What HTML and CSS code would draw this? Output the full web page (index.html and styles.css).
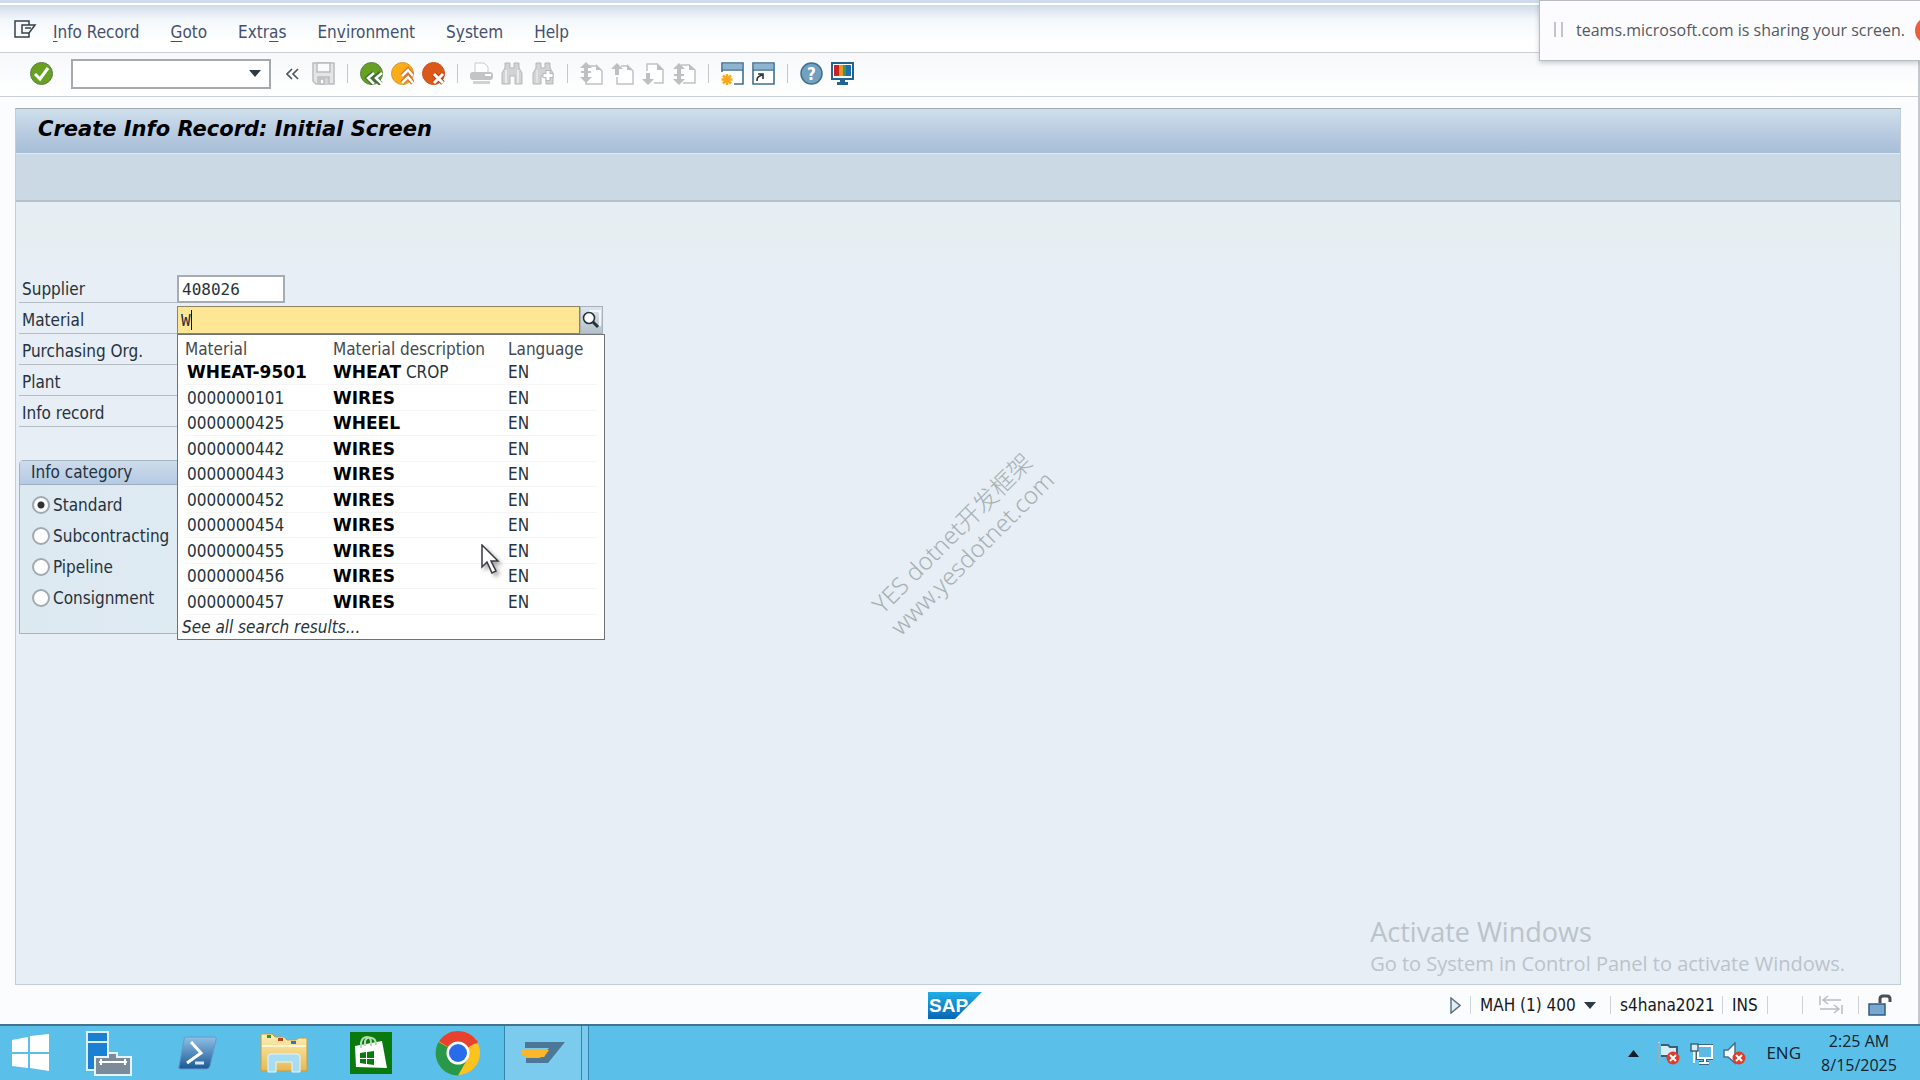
FILE: index.html
```html
<!DOCTYPE html>
<html lang="en">
<head>
<meta charset="utf-8">
<title>Create Info Record: Initial Screen</title>
<link rel="stylesheet" href="styles.css">
</head>
<body>
<div class="window">
  <nav class="menubar">
    <button class="icon-btn menu-icon" aria-label="Menu"><svg width="24" height="18" viewBox="0 0 24 18" fill="none" stroke="#35424c" stroke-width="1.5"><path d="M15 5V1H1v16h14v-4"/><path d="M8 5h13l-6 8H8z"/><path d="M11 8h6"/></svg></button>
    <a href="#"><u>I</u>nfo Record</a>
    <a href="#"><u>G</u>oto</a>
    <a href="#">Extr<u>a</u>s</a>
    <a href="#">En<u>v</u>ironment</a>
    <a href="#">S<u>y</u>stem</a>
    <a href="#"><u>H</u>elp</a>
  </nav>

  <div class="toolbar">
    <button class="icon-btn" aria-label="Enter"><svg width="23" height="23" viewBox="0 0 23 23"><circle cx="11.500" cy="11.500" r="11" fill="#68a022" stroke="#5b7f43"/><path d="M5 12l5 5 8-11" fill="none" stroke="#fff" stroke-width="3"/></svg></button>
    <div class="command">
      <input type="text" aria-label="Command">
      <svg width="12" height="7" viewBox="0 0 12 7"><path d="M0 0h12L6 7z" fill="#2e3a42"/></svg>
    </div>
    <button class="icon-btn collapse" aria-label="Collapse"><svg width="13" height="12" viewBox="0 0 13 12" fill="none" stroke="#4a555d" stroke-width="1.600"><path d="M6 1L1 6l5 5M12 1L7 6l5 5"/></svg></button>
    <button class="icon-btn" aria-label="Save"><svg width="23" height="23" viewBox="0 0 23 23" fill="#e4e5e6" stroke="#babcbf" stroke-width="1.500"><path d="M1 1h21v21H4l-3-3z"/><path d="M5 1h13v9H5z" fill="#fbfbfb"/><path d="M6 22v-7h11v7" fill="#d2d4d6"/><path d="M8 17h4v5H8z" fill="#fff"/></svg></button>
    <span class="sep"></span>
    <button class="icon-btn" aria-label="Back"><svg width="23" height="23" viewBox="0 0 23 23"><circle cx="11.500" cy="11.500" r="11" fill="#68a022" stroke="#598441"/><path d="M14 11l-6 5 6 6M21 11l-6 5 6 6" fill="none" stroke="#456f38" stroke-width="5"/><path d="M14 11l-6 5 6 6M22 11l-6 5 6 6" fill="none" stroke="#fff" stroke-width="2.500"/></svg></button>
    <button class="icon-btn" aria-label="Exit"><svg width="23" height="23" viewBox="0 0 23 23"><circle cx="11.500" cy="11.500" r="11" fill="#fbad18" stroke="#dc9636"/><path d="M11 14l6-6 5 6M11 21l6-6 5 6" fill="none" stroke="#d9752a" stroke-width="5"/><path d="M11 14l6-6 5 6M11 21l6-6 5 6" fill="none" stroke="#fff" stroke-width="2.500"/></svg></button>
    <button class="icon-btn" aria-label="Cancel"><svg width="23" height="23" viewBox="0 0 23 23"><circle cx="11.500" cy="11.500" r="11" fill="#dc5818" stroke="#c7551f"/><path d="M12 12l9 9M21 12l-9 9" stroke="#b6441a" stroke-width="5"/><path d="M12 12l9 9M21 12l-9 9" stroke="#fff" stroke-width="3"/></svg></button>
    <span class="sep"></span>
    <button class="icon-btn" aria-label="Print"><svg width="23" height="23" viewBox="0 0 23 23"><path d="M5 10V1h9l4 4v5" fill="#fff" stroke="#c8cacb"/><rect x="0" y="10" width="23" height="8" rx="3" fill="#c2c4c5"/><path d="M15 13h6" stroke="#fff" stroke-width="2"/><path d="M3 19h17v3H3z" fill="#d0d1d2"/></svg></button>
    <button class="icon-btn" aria-label="Find"><svg width="23" height="23" viewBox="0 0 23 23"><path d="M4 1h5v5h4V1h5v5l3 5v11h-7v-8H9v8H1V11l3-5z" fill="#d1d3d4" stroke="#b5b7b9"/><path d="M5 8v13M17 8v13" stroke="#f2f2f2" stroke-width="1.500"/></svg></button>
    <button class="icon-btn" aria-label="Find next"><svg width="23" height="23" viewBox="0 0 23 23"><path d="M4 1h5v5h4V1h5v5l3 5v11h-7v-8H9v8H1V11l3-5z" fill="#d1d3d4" stroke="#b5b7b9"/><path d="M5 8v13" stroke="#f2f2f2"/><path d="M16 8v11M10.500 13.500h11" stroke="#b8babb" stroke-width="5"/><path d="M16 9v9M11.500 13.500h9" stroke="#fff" stroke-width="3"/></svg></button>
    <span class="sep"></span>
    <button class="icon-btn" aria-label="First page"><svg width="23" height="23" viewBox="0 0 23 23"><path d="M8 4h8l6 5v13H6v-3" fill="#fff" stroke="#c0c2c3" stroke-width="1.500"/><path d="M16 2l6 6h-6zM6 0l6 6H8v9h4l-6 6-6-6h4V6H0zM1 9h10v2H1z" fill="#bdbfc0"/></svg></button>
    <button class="icon-btn" aria-label="Previous page"><svg width="23" height="23" viewBox="0 0 23 23"><path d="M10 4h6l6 5v13H6v-7" fill="#fff" stroke="#c0c2c3" stroke-width="1.500"/><path d="M16 2l6 6h-6zM6 1l6 6H8v6H4V7H0z" fill="#bdbfc0"/></svg></button>
    <button class="icon-btn" aria-label="Next page"><svg width="23" height="23" viewBox="0 0 23 23"><path d="M5 9V2h10l6 6v13h-9" fill="#fff" stroke="#c0c2c3" stroke-width="1.500"/><path d="M15 1l7 7h-7zM4 11h4v6h4l-6 6-6-6h4z" fill="#bdbfc0"/></svg></button>
    <button class="icon-btn" aria-label="Last page"><svg width="23" height="23" viewBox="0 0 23 23"><path d="M8 3h8l6 5v13H10" fill="#fff" stroke="#c0c2c3" stroke-width="1.500"/><path d="M16 2l6 6h-6zM6 1l6 6H8v10h4l-6 6-6-6h4V7H0zM1 12h10v2H1z" fill="#bdbfc0"/></svg></button>
    <span class="sep"></span>
    <button class="icon-btn" aria-label="New session"><svg width="23" height="23" viewBox="0 0 23 23"><path d="M1 10V1h21v21H13" fill="#fff" stroke="#41708f" stroke-width="1.600"/><path d="M2 2h19v5H2z" fill="#8db5d1"/><path d="M1 8h21" stroke="#41708f" stroke-width="1.500"/><path d="M6 12v11M.5 17.500h11M2 13.500l8 8M10 13.500l-8 8" stroke="#f9a91e" stroke-width="2.500"/></svg></button>
    <button class="icon-btn" aria-label="Shortcut"><svg width="23" height="23" viewBox="0 0 23 23"><path d="M1 1h21v21H1z" fill="#fff" stroke="#41708f" stroke-width="1.600"/><path d="M2 2h19v5H2z" fill="#8db5d1"/><path d="M1 8h21" stroke="#41708f" stroke-width="1.500"/><path d="M5 19c0-4 1-4 5-6M6 12h5v5" fill="none" stroke="#2d3337" stroke-width="1.600"/></svg></button>
    <span class="sep"></span>
    <button class="icon-btn help" aria-label="Help"><svg width="23" height="23" viewBox="0 0 23 23"><circle cx="11.500" cy="11.500" r="10.500" fill="#71a0c1" stroke="#3f6f91" stroke-width="1.500"/><text x="11.500" y="18" text-anchor="middle">?</text></svg></button>
    <button class="icon-btn" aria-label="Customize layout"><svg width="23" height="23" viewBox="0 0 23 23"><path d="M1 1h21v16H1z" fill="#fff" stroke="#23638f" stroke-width="2"/><path d="M3 3h5v11H3z" fill="#cb2026"/><path d="M8 3h4v11H8z" fill="#e69a24"/><path d="M12 3h3v11h-3z" fill="#3d9a49"/><path d="M15 3h5v11h-5z" fill="#1d70ad"/><path d="M9 17h5v3h3v3H6v-3h3z" fill="#23638f"/></svg></button>
  </div>

  <main class="screen">
    <header class="titlebar"><h1>Create Info Record: Initial Screen</h1></header>
    <div class="app-toolbar"></div>
    <form class="form">
      <div class="row"><label for="supplier">Supplier</label><input id="supplier" class="field supplier" type="text" value="408026"></div>
      <div class="row">
        <label for="material">Material</label>
        <div class="lookup">
          <input id="material" class="field material" type="text" value="W">
          <span class="caret"></span>
          <button type="button" class="search" aria-label="Search"><svg width="20" height="20" viewBox="0 0 20 20"><path d="M8 1h11v15" fill="none" stroke="#f4f7f9" stroke-width="2"/><circle cx="8" cy="8" r="5.500" fill="#fff" stroke="#27323a" stroke-width="1.600"/><path d="M12 12l5 5" stroke="#27323a" stroke-width="3"/></svg></button>
          <div class="popup">
            <table>
              <thead><tr><th class="c-mat">Material</th><th class="c-desc">Material description</th><th>Language</th></tr></thead>
              <tbody>
                <tr><td><b>WHEAT-9501</b></td><td><b>WHEAT</b> CROP</td><td>EN</td></tr>
                <tr><td>0000000101</td><td><b>WIRES</b></td><td>EN</td></tr>
                <tr><td>0000000425</td><td><b>WHEEL</b></td><td>EN</td></tr>
                <tr><td>0000000442</td><td><b>WIRES</b></td><td>EN</td></tr>
                <tr><td>0000000443</td><td><b>WIRES</b></td><td>EN</td></tr>
                <tr><td>0000000452</td><td><b>WIRES</b></td><td>EN</td></tr>
                <tr><td>0000000454</td><td><b>WIRES</b></td><td>EN</td></tr>
                <tr><td>0000000455</td><td><b>WIRES</b></td><td>EN</td></tr>
                <tr><td>0000000456</td><td><b>WIRES</b></td><td>EN</td></tr>
                <tr><td>0000000457</td><td><b>WIRES</b></td><td>EN</td></tr>
              </tbody>
            </table>
            <a class="see-all" href="#">See all search results...</a>
            <svg class="pointer" width="20" height="32" viewBox="0 0 20 32"><path d="M1 1v22l5-5 5 11 4-2-5-10h7z" fill="#fff" stroke="#3a3a42" stroke-width="1.500"/></svg>
          </div>
        </div>
      </div>
      <div class="row"><label>Purchasing Org.</label></div>
      <div class="row"><label>Plant</label></div>
      <div class="row"><label>Info record</label></div>

      <fieldset class="group">
        <legend class="group-title">Info category</legend>
        <label class="option"><input type="radio" name="category" checked>Standard</label>
        <label class="option"><input type="radio" name="category">Subcontracting</label>
        <label class="option"><input type="radio" name="category">Pipeline</label>
        <label class="option"><input type="radio" name="category">Consignment</label>
      </fieldset>
    </form>
    <div class="watermark">YES dotnet开发框架<br>www.yesdotnet.com</div>
    <div class="activate"><p class="activate-title">Activate Windows</p><p>Go to System in Control Panel to activate Windows.</p></div>
  </main>

  <footer class="status">
    <svg class="sap" width="54" height="27" viewBox="0 0 54 27"><defs><linearGradient id="sap" x2="0" y2="1"><stop stop-color="#20aee6"/><stop offset="1" stop-color="#0866b5"/></linearGradient></defs><path d="M0 0h54L27 27H0z" fill="url(#sap)"/><text x="1" y="20">SAP</text></svg>
    <div class="status-items">
      <svg class="expand" width="11" height="17" viewBox="0 0 11 17"><path d="M1 1l9 7.500L1 16z" fill="#e2eef6" stroke="#5d7485" stroke-width="1.500"/></svg>
      <span class="cell client">MAH (1) 400 <svg width="12" height="7" viewBox="0 0 12 7"><path d="M0 0h12L6 7z" fill="#2e3a42"/></svg></span>
      <span class="cell host">s4hana2021</span>
      <span class="cell mode">INS</span>
      <span class="cell blank"></span>
      <span class="cell arrows"><svg width="24" height="20" viewBox="0 0 24 20" fill="none" stroke="#bbbdc0" stroke-width="1.500"><path d="M1 1v9M22 5H4M9 1L4 5l5 4M23 10v9M1 14h19M15 10l5 4-5 4"/></svg></span>
      <span class="cell lock"><svg width="24" height="22" viewBox="0 0 24 22"><path d="M12 9V5q0-3 3-3h4q3 0 3 3v3" fill="none" stroke="#4b4f54" stroke-width="3"/><path d="M1 10h16v11H1z" fill="#78a8cf" stroke="#2f5c84" stroke-width="1.500"/></svg></span>
    </div>
  </footer>
</div>

<aside class="sharing"><span class="grip"></span>teams.microsoft.com is sharing your screen.<span class="stop"></span></aside>

<footer class="taskbar">
  <button class="task start" aria-label="Start"><svg width="39" height="38" viewBox="0 0 39 38" fill="#fff"><path d="M1 6l16-3v15H1zM19 2l19-2v18H19zM1 20h16v14L1 32zM19 20h19v17l-19-3z"/></svg></button>
  <button class="task server" aria-label="Server Manager"><svg width="46" height="46" viewBox="0 0 46 46"><path d="M1 2h21v38H1z" fill="#1b80d3" stroke="#d9f1fc" stroke-width="2"/><path d="M1 12h21" stroke="#d9f1fc" stroke-width="2"/><path d="M22 27v-4h9v4h14v18H9V27z" fill="#7c8b9a" stroke="#e5f3fa" stroke-width="2"/><path d="M13 32h28M15 29v6M39 29v6" stroke="#fff" stroke-width="2"/></svg></button>
  <button class="task powershell" aria-label="PowerShell"><svg width="40" height="34" viewBox="0 0 40 34"><defs><linearGradient id="ps" x2="0" y2="1"><stop stop-color="#8fc0e4"/><stop offset="1" stop-color="#1c5796"/></linearGradient></defs><path d="M9 1h29q2 0 1 3l-6 26q-1 3-3 3H3q-2 0-1-3L7 4q0-3 2-3z" fill="url(#ps)" stroke="#639cc8"/><path d="M14 6l10 11L10 27" fill="none" stroke="#fff" stroke-width="3"/><path d="M18 27h9" stroke="#d7e9f7" stroke-width="3"/></svg></button>
  <button class="task explorer" aria-label="File Explorer"><svg width="48" height="40" viewBox="0 0 48 40"><defs><linearGradient id="fo" x2="0" y2="1"><stop stop-color="#fff0b4"/><stop offset="1" stop-color="#e4b955"/></linearGradient></defs><path d="M1 38V2q0-1 1-1h10l3 3h9l3 3h9l3-2h7q1 0 1 2v31z" fill="url(#fo)" stroke="#c79b45"/><path d="M7 2h4v3H7z" fill="#2a963b"/><path d="M18 5h5v3h-5z" fill="#b64621"/><path d="M31 8h5v3h-5z" fill="#2e75c9"/><path d="M2 13h44" stroke="#fff5ce" stroke-width="2"/><path d="M8 39V24q0-3 3-3h26q3 0 3 3v15h-8V29H16v10z" fill="#a7dcf1" stroke="#e6f7fd"/></svg></button>
  <button class="task store" aria-label="Store"><svg width="42" height="42" viewBox="0 0 42 42"><path d="M0 0h42v42H0z" fill="#0a7a0e"/><path d="M5 14l27-5 5 27-31-1z" fill="#fff"/><path d="M11 16v-5q1-6 6-6 4 0 4 6v3M15 14V9q2-5 7-3 4 1 4 7" fill="none" stroke="#b5ddb4" stroke-width="2"/><path d="M10 21l6-1v6h-6zM17 20l7-1v7h-7zM10 27h6v5l-6-1zM17 27h7v6l-7-1z" fill="#0a7a0e"/></svg></button>
  <button class="task chrome" aria-label="Chrome"><svg width="46" height="46" viewBox="0 0 46 46"><circle cx="23" cy="23" r="22" fill="#fcc31f"/><path d="M23 23L4 11.500A22.500 22.500 0 0 1 42.500 12z" fill="#e8412e"/><path d="M23 23L3.500 12A22.500 22.500 0 0 0 23 45.500L33 28z" fill="#299848"/><path d="M23 12h19.500" stroke="#e8412e" stroke-width="3"/><circle cx="23" cy="23" r="11.500" fill="#fff"/><circle cx="23" cy="23" r="9" fill="#276de9"/></svg></button>
  <button class="task active" aria-label="SAP Logon"><svg width="46" height="24" viewBox="0 0 46 24"><path d="M5 1h40L28 22H6v-5h14l9-10H5z" fill="#4d7796"/><path d="M1 9h28l-5 7H6v-2H1z" fill="#fdb529"/></svg></button>
  <span class="stack"></span>
  <div class="tray">
    <svg class="up" width="11" height="7" viewBox="0 0 11 7"><path d="M0 7h11L5.500 0z" fill="#111d27"/></svg>
    <svg width="23" height="23" viewBox="0 0 23 23"><path d="M2 1v21M4 3h7l2 2h7v9H4" fill="#d5ecf7" stroke="#355f7a" stroke-width="2"/><path d="M2 0v22" stroke="#fff"/><circle cx="16" cy="16" r="6.500" fill="#de3d2b"/><path d="M13 13l6 6M19 13l-6 6" stroke="#fff" stroke-width="2"/></svg>
    <svg width="23" height="23" viewBox="0 0 23 23"><path d="M8 4h14v12H8zM15 16v5M9 21h10" fill="#70c5eb" stroke="#3c667f" stroke-width="4"/><path d="M8 4h14v12H8zM15 16v5M9 21h10M4 9v12" fill="#5ab9e6" stroke="#fff" stroke-width="2"/><path d="M1 2h7v7H1z" fill="#d9edf7" stroke="#3c667f" stroke-width="1.500"/></svg>
    <svg width="23" height="23" viewBox="0 0 23 23"><path d="M1 8h4l7-7v20l-7-6H1z" fill="#f4fafd" stroke="#497086" stroke-width="1.500"/><circle cx="16" cy="16" r="6.500" fill="#de3d2b"/><path d="M13 13l6 6M19 13l-6 6" stroke="#fff" stroke-width="2"/></svg>
    <span class="lang">ENG</span>
    <time class="clock">2:25 AM<br>8/15/2025</time>
  </div>
</footer>
</body>
</html>
```
FILE: styles.css
```css
* { box-sizing: border-box; }
body {
  margin: 0;
  min-height: 100vh;
  display: flex;
  flex-direction: column;
  position: relative;
  overflow-x: hidden;
  font: 17px/24px "DejaVu Sans Condensed", "DejaVu Sans", sans-serif;
  color: #26323c;
  background: #fbfcfe;
}
svg { display: block; flex: none; }
button, input { font: inherit; color: inherit; }
a { color: inherit; text-decoration: none; }

.window {
  flex: 1;
  display: flex;
  flex-direction: column;
  border-top: 3px solid #cfdbec;
  border-right: 2px solid #c3c8ce;
}
.icon-btn {
  padding: 0;
  border: 0;
  background: none;
  flex: none;
}
.menubar {
  display: flex;
  align-items: center;
  gap: 31px;
  height: 50px;
  padding: 6px 14px 0;
  color: #45506e;
  border-top: 2px solid #fff;
  border-bottom: 1px solid #cccfd4;
  background: linear-gradient(#cfdae8, #f3f7fc 14px, #fff 36px);
}
.menubar u { text-underline-offset: 3px; }
.menu-icon { margin: 0 -16px 6px 0; }

.toolbar {
  display: flex;
  align-items: center;
  gap: 8px;
  height: 44px;
  padding: 0 30px 2px;
  border-bottom: 1px solid #cccfd4;
  background: linear-gradient(#f6f8fa, #fff);
}
.command {
  display: flex;
  align-items: center;
  width: 200px;
  height: 30px;
  margin: 0 7px 0 10px;
  padding-right: 8px;
  border: 2px solid #a6a9ad;
  background: #fff;
}
.command input {
  flex: 1;
  min-width: 0;
  height: 24px;
  border: 0;
  outline: 0;
  background: none;
}
.collapse { margin-right: 5px; }
.sep {
  width: 1px;
  height: 19px;
  margin: 0 4px;
  background: #c4c8cb;
}
.help text { font: bold 17px "DejaVu Sans Condensed", sans-serif; fill: #fff; }

.screen {
  flex: 1;
  position: relative;
  margin: 11px 17px 0 15px;
  border: 1px solid #c5ced6;
  border-top-color: #a3abb3;
  background: linear-gradient(#dfedf8, #e6eef2 120px, #e7eef5 160px);
}
.titlebar {
  height: 45px;
  padding: 8px 22px;
  border-bottom: 1px solid #d9edfa;
  background: linear-gradient(#cfdfec, #b6c9df 60%, #a7bfd6);
}
.titlebar h1 {
  margin: 0;
  font: italic bold 21px/24px "DejaVu Sans", sans-serif;
  color: #000;
}
.app-toolbar {
  height: 48px;
  border-bottom: 2px solid #b3c1cd;
  background: #cbd9e5;
}
.form { padding: 70px 3px 0; }
.row {
  display: grid;
  grid-template-columns: 158px auto;
  align-items: end;
  justify-content: start;
  height: 31px;
}
.row > label {
  padding: 5px 3px 1px;
  border-bottom: 1px solid #b5bdc4;
}
.field {
  display: block;
  height: 28px;
  padding: 0 3px;
  border: 2px solid #a5adb4;
  outline: 0;
  background: #fff;
  font: 16px "DejaVu Sans Mono", monospace;
}
.supplier { width: 108px; }
.lookup { display: flex; position: relative; }
.material {
  width: 403px;
  border: 1px solid #8c8463;
  background: #fee794;
}
.caret {
  position: absolute;
  left: 14px;
  top: 4px;
  width: 1px;
  height: 20px;
  background: #111;
}
.search {
  width: 23px;
  height: 28px;
  padding: 0;
  border: 1px solid #a7b1ba;
  background: linear-gradient(#dce5ec, #b4c0ca);
}
.popup {
  position: absolute;
  left: 0;
  top: 28px;
  z-index: 2;
  width: 428px;
  padding: 3px 7px 0;
  border: 1px solid #6e7276;
  background: #fff;
}
.popup table {
  width: 100%;
  height: 277px;
  table-layout: fixed;
  border-collapse: collapse;
}
.popup th {
  height: 22px;
  padding: 0;
  line-height: 22px;
  text-align: left;
  font-weight: normal;
  color: #45494f;
}
.c-mat { width: 148px; }
.c-desc { width: 175px; }
.popup td {
  padding: 0;
  line-height: 24px;
  border-bottom: 1px solid #f5f5f6;
}
.popup td:first-child { padding-left: 2px; }
.popup b { font-family: "DejaVu Sans", sans-serif; color: #000; }
.see-all {
  display: block;
  margin-left: -3px;
  line-height: 24px;
  font-style: italic;
}
.pointer {
  position: absolute;
  left: 303px;
  top: 209px;
  filter: drop-shadow(3px 3px 2px #0005);
}

.group {
  width: 400px;
  margin: 33px 0 0;
  padding: 0 0 20px;
  border: 1px solid #a5b4c1;
  border-radius: 4px 4px 0 0;
  background: linear-gradient(90deg, #dde9f1, #e2ecf3);
}
.group-title {
  float: left;
  width: 100%;
  height: 24px;
  margin-bottom: 4px;
  padding: 0 11px;
  line-height: 22px;
  border-bottom: 1px solid #9cafc0;
  background: linear-gradient(#cddcec, #b5cae3);
}
.option {
  clear: both;
  display: flex;
  align-items: center;
  gap: 3px;
  height: 31px;
  padding-left: 12px;
}
.option input {
  appearance: none;
  width: 18px;
  height: 18px;
  margin: 0;
  border: 2px solid #a1a9b1;
  border-radius: 50%;
  background: #fff;
}
.option input:checked { background: radial-gradient(circle, #2c3338 3px, #fff 4px); }

.watermark {
  position: absolute;
  left: 50%;
  top: 50%;
  width: 260px;
  margin: -32px 0 0 -126px;
  text-align: center;
  font: 300 24px/28px "Noto Sans", "Noto Sans CJK SC", sans-serif;
  color: #a8b0b2;
  transform: rotate(-45deg);
}
.activate {
  position: absolute;
  right: 55px;
  bottom: 6px;
  font: 20px/28px "Open Sans", sans-serif;
  color: #bbc3cb;
}
.activate p { margin: 0; }
.activate .activate-title { font-size: 27px; line-height: 36px; }

.status {
  display: flex;
  align-items: center;
  justify-content: space-between;
  height: 39px;
  padding: 1px 26px 0 48.400%;
  color: #16191c;
}
.sap text { font: bold 19px "Liberation Sans", sans-serif; fill: #fff; }
.status-items { display: flex; align-items: center; }
.expand { margin-right: 9px; }
.cell {
  display: flex;
  align-items: center;
  gap: 8px;
  height: 18px;
  padding-left: 9px;
  border-left: 1px solid #cfd2d5;
}
.client { width: 140px; }
.host { width: 112px; }
.mode { width: 45px; }
.blank { width: 35px; }
.arrows { width: 56px; padding-left: 16px; }

.sharing {
  position: absolute;
  right: 0;
  top: 0;
  z-index: 3;
  display: flex;
  align-items: center;
  width: 381px;
  height: 61px;
  padding: 0 0 2px 14px;
  overflow: hidden;
  white-space: nowrap;
  font: 16px/24px "Open Sans", sans-serif;
  color: #55585e;
  border: solid #b9bdc3;
  border-width: 1px 0 1px 1px;
  background: #fcfcfe;
  box-shadow: 0 2px 5px #0003;
}
.grip {
  flex: none;
  width: 9px;
  height: 15px;
  margin-right: 13px;
  border: solid #c3c5c8;
  border-width: 0 2px;
}
.stop {
  position: absolute;
  right: -22px;
  top: 16px;
  width: 27px;
  height: 27px;
  border-radius: 50%;
  background: #e9603b;
}

.taskbar {
  display: flex;
  align-items: stretch;
  height: 56px;
  border-top: 2px solid #43738e;
  background: #5ac0ea;
  color: #12242f;
}
.task {
  display: flex;
  align-items: center;
  justify-content: center;
  width: 87px;
  padding: 0;
  border: 0;
  background: none;
}
.start { width: 60px; }
.server { width: 98px; }
.powershell { width: 78px; }
.explorer { width: 95px; }
.store { width: 80px; }
.chrome { width: 93px; }
.active {
  width: 78px;
  border: solid #3783a9;
  border-width: 0 1px;
  background: #7bcbee;
}
.stack {
  width: 7px;
  border-right: 1px solid #3783a9;
  background: #7bcbee;
}
.tray {
  display: flex;
  align-items: center;
  gap: 10px;
  margin-left: auto;
  padding-right: 21px;
}
.up { margin-right: 8px; }
.lang { margin-left: 10px; font: 17px/24px "Open Sans", sans-serif; }
.clock {
  width: 80px;
  margin-left: 8px;
  text-align: center;
  white-space: nowrap;
  font: 16px/24px "Open Sans", sans-serif;
}
```
